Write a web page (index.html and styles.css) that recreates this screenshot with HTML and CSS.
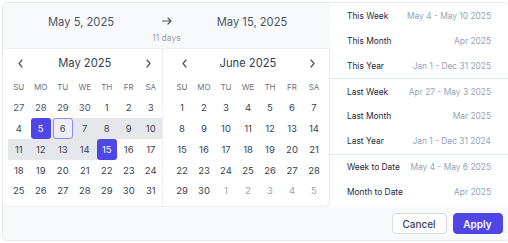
FILE: index.html
```html
<!DOCTYPE html>
<html>
<head>
<meta charset="utf-8">
<link rel="stylesheet" href="styles.css">
</head>
<body>
<div class="picker">
  <div class="main">
    <div class="left">
      <div class="range-head">
        <div class="rh-row">
          <div class="rh-date">May 5, 2025</div>
          <svg class="rh-arrow" width="10" height="8" viewBox="0 0 10 8"><path d="M0.5 4H9M6 1L9 4L6 7" fill="none" stroke="#4b5563" stroke-width="1.1" stroke-linecap="round" stroke-linejoin="round"/></svg>
          <div class="rh-date">May 15, 2025</div>
        </div>
        <div class="rh-days">11 days</div>
      </div>
      <div class="cals">
        <div class="cal cal-a">
          <div class="nav">
            <svg class="chev" width="5" height="9" viewBox="0 0 5 9"><path d="M4 1L1 4.5L4 8" fill="none" stroke="#4b5563" stroke-width="1.2" stroke-linecap="round" stroke-linejoin="round"/></svg>
            <div class="title">May 2025</div>
            <svg class="chev" width="5" height="9" viewBox="0 0 5 9"><path d="M1 1L4 4.5L1 8" fill="none" stroke="#4b5563" stroke-width="1.2" stroke-linecap="round" stroke-linejoin="round"/></svg>
          </div>
          <div class="grid">
            <div class="dow">SU</div><div class="dow">MO</div><div class="dow">TU</div><div class="dow">WE</div><div class="dow">TH</div><div class="dow">FR</div><div class="dow">SA</div>
            <div class="d o">27</div><div class="d o">28</div><div class="d o">29</div><div class="d o">30</div><div class="d">1</div><div class="d">2</div><div class="d">3</div>
            <div class="d">4</div><div class="d rs"><span class="sel">5</span></div><div class="d r"><span class="hov">6</span></div><div class="d r">7</div><div class="d r">8</div><div class="d r">9</div><div class="d r">10</div>
            <div class="d r">11</div><div class="d r">12</div><div class="d r">13</div><div class="d r">14</div><div class="d re"><span class="sel">15</span></div><div class="d">16</div><div class="d">17</div>
            <div class="d">18</div><div class="d">19</div><div class="d">20</div><div class="d">21</div><div class="d">22</div><div class="d">23</div><div class="d">24</div>
            <div class="d">25</div><div class="d">26</div><div class="d">27</div><div class="d">28</div><div class="d">29</div><div class="d">30</div><div class="d">31</div>
          </div>
        </div>
        <div class="cal cal-b">
          <div class="nav">
            <svg class="chev" width="5" height="9" viewBox="0 0 5 9"><path d="M4 1L1 4.5L4 8" fill="none" stroke="#4b5563" stroke-width="1.2" stroke-linecap="round" stroke-linejoin="round"/></svg>
            <div class="title">June 2025</div>
            <svg class="chev" width="5" height="9" viewBox="0 0 5 9"><path d="M1 1L4 4.5L1 8" fill="none" stroke="#4b5563" stroke-width="1.2" stroke-linecap="round" stroke-linejoin="round"/></svg>
          </div>
          <div class="grid">
            <div class="dow">SU</div><div class="dow">MO</div><div class="dow">TU</div><div class="dow">WE</div><div class="dow">TH</div><div class="dow">FR</div><div class="dow">SA</div>
            <div class="d">1</div><div class="d">2</div><div class="d">3</div><div class="d">4</div><div class="d">5</div><div class="d">6</div><div class="d">7</div>
            <div class="d">8</div><div class="d">9</div><div class="d">10</div><div class="d">11</div><div class="d">12</div><div class="d">13</div><div class="d">14</div>
            <div class="d">15</div><div class="d">16</div><div class="d">17</div><div class="d">18</div><div class="d">19</div><div class="d">20</div><div class="d">21</div>
            <div class="d">22</div><div class="d">23</div><div class="d">24</div><div class="d">25</div><div class="d">26</div><div class="d">27</div><div class="d">28</div>
            <div class="d">29</div><div class="d">30</div><div class="d n">1</div><div class="d n">2</div><div class="d n">3</div><div class="d n">4</div><div class="d n">5</div>
          </div>
        </div>
      </div>
    </div>
    <div class="presets">
      <div class="group first">
        <div class="preset"><span class="pl">This Week</span><span class="pv">May 4 - May 10 2025</span></div>
        <div class="preset"><span class="pl">This Month</span><span class="pv">Apr 2025</span></div>
        <div class="preset"><span class="pl">This Year</span><span class="pv">Jan 1 - Dec 31 2025</span></div>
      </div>
      <div class="group">
        <div class="preset"><span class="pl">Last Week</span><span class="pv">Apr 27 - May 3 2025</span></div>
        <div class="preset"><span class="pl">Last Month</span><span class="pv">Mar 2025</span></div>
        <div class="preset"><span class="pl">Last Year</span><span class="pv">Jan 1 - Dec 31 2024</span></div>
      </div>
      <div class="group">
        <div class="preset"><span class="pl">Week to Date</span><span class="pv">May 4 - May 6 2025</span></div>
        <div class="preset"><span class="pl">Month to Date</span><span class="pv">Apr 2025</span></div>
      </div>
    </div>
  </div>
  <div class="footer">
    <button class="btn cancel">Cancel</button>
    <button class="btn apply">Apply</button>
  </div>
</div>
</body>
</html>
```

FILE: styles.css
```css
html, body {
  margin: 0;
  padding: 0;
  overflow: hidden;
  background: #ffffff;
}
body {
  font-family: Inter, "Noto Sans", sans-serif;
  color: #374151;
}
.picker {
  margin: 2px 0 0 2px;
  width: 506px;
  border: 1px solid #e7e9ed;
  border-radius: 6px;
  background: #ffffff;
  overflow: hidden;
  box-shadow: 0 1px 2px rgba(0,0,0,0.06);
}
.main {
  display: flex;
  height: 204px;
}
.left {
  width: 327px;
  background: #f8f9fb;
  display: flex;
  flex-direction: column;
}
.range-head {
  height: 45px;
  box-sizing: border-box;
  padding-top: 12px;
}
.rh-row {
  display: grid;
  grid-template-columns: 1fr 10px 1fr;
  column-gap: 2.5px;
  align-items: center;
  height: 14px;
}
.rh-date {
  text-align: center;
  font-size: 11.2px;
  line-height: 14px;
  color: #4b5563;
}
.rh-arrow { display: block; margin-top: -2px; }
.rh-days {
  text-align: center;
  font-size: 8.5px;
  line-height: 10px;
  color: #9ca3af;
  margin-top: 4px;
}
.cals {
  flex: 1;
  display: flex;
  background: #ffffff;
  border-top: 1px solid #eef0f3;
  border-right: 1px solid #e9ebef;
  border-bottom: 1px solid #eceef1;
  border-radius: 0 0 6px 6px;
}
.cal {
  box-sizing: border-box;
  display: flex;
  flex-direction: column;
}
.cal-a {
  width: 160px;
  padding-left: 4.75px;
  border-right: 1px solid #eef0f3;
}
.cal-b {
  flex: 1;
  padding-left: 8px;
}
.nav {
  width: 154px;
  height: 28px;
  box-sizing: border-box;
  padding: 0 10.5px;
  display: flex;
  align-items: center;
}
.chev { display: block; }
.title {
  flex: 1;
  text-align: center;
  font-size: 11.2px;
  font-weight: 400;
  color: #374151;
}
.grid {
  width: 154px;
  display: grid;
  grid-template-columns: repeat(7, 22px);
  grid-template-rows: 20.6px repeat(5, 20.75px);
}
.dow {
  display: flex;
  align-items: center;
  justify-content: center;
  font-size: 8px;
  font-weight: 400;
  color: #6b7280;
}
.d {
  display: flex;
  align-items: center;
  justify-content: center;
  font-size: 9.5px;
  color: #374151;
}
.d.o { color: #4b5563; }
.d.n { color: #9ca3af; }
.d.r { background: #e5e7eb; }
.d.rs { background: linear-gradient(to right, transparent 50%, #e5e7eb 50%); }
.d.re { background: linear-gradient(to right, #e5e7eb 50%, transparent 50%); }
.sel, .hov {
  box-sizing: border-box;
  width: 20px;
  height: 100%;
  display: flex;
  align-items: center;
  justify-content: center;
  border-radius: 3px;
}
.sel {
  background: #4f46e5;
  color: #ffffff;
}
.hov {
  border: 1px solid #8f88ee;
  background: #eceef2;
}
.presets {
  flex: 1;
  background: #ffffff;
}
.group {
  border-top: 1px solid #e2e8f0;
}
.group.first {
  border-top: none;
  padding-top: 1px;
}
.preset {
  height: 24.75px;
  display: flex;
  align-items: center;
  justify-content: space-between;
  padding: 0 18px 0 17px;
  font-size: 8.4px;
}
.pl { color: #1f2937; font-weight: 400; }
.pv { color: #94a3b8; }
.footer {
  height: 33px;
  background: #f8f9fb;
  display: flex;
  align-items: center;
  justify-content: flex-end;
  gap: 6px;
  padding-right: 6.5px;
}
.btn {
  height: 21px;
  border-radius: 4px;
  font-family: Inter, "Noto Sans", sans-serif;
  font-size: 10px;
  font-weight: 500;
  padding: 0;
  cursor: pointer;
}
.cancel {
  width: 55px;
  background: #ffffff;
  border: 1px solid #d8dbe0;
  color: #374151;
}
.apply {
  width: 50px;
  background: #4f46e5;
  border: 1px solid #4f46e5;
  color: #ffffff;
  font-weight: 600;
}
```
